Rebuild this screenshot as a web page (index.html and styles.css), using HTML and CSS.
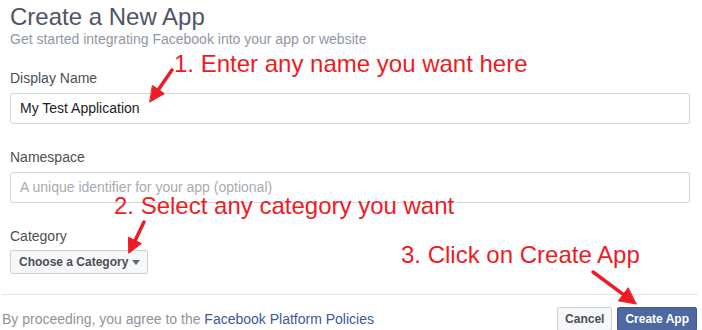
FILE: index.html
```html
<!DOCTYPE html>
<html>
<head>
<meta charset="utf-8">
<link rel="stylesheet" href="styles.css">
</head>
<body>
<div class="page">
  <div class="main">
    <h1 class="title">Create a New App</h1>
    <p class="subtitle">Get started integrating Facebook into your app or website</p>

    <div class="field">
      <label class="label">Display Name</label>
      <div class="input">My Test Application</div>
    </div>

    <div class="field">
      <label class="label">Namespace</label>
      <div class="input placeholder">A unique identifier for your app (optional)</div>
    </div>

    <div class="field">
      <label class="label">Category</label>
      <div class="select-row">
        <button class="select">Choose a Category <span class="caret"></span></button>
      </div>
    </div>
  </div>

  <div class="footer">
    <p class="terms">By proceeding, you agree to the <a class="link">Facebook Platform Policies</a></p>
    <div class="actions">
      <button class="btn btn-cancel">Cancel</button>
      <button class="btn btn-primary">Create App</button>
    </div>
  </div>

  <div class="note note-1">1. Enter any name you want here</div>
  <div class="note note-2">2. Select any category you want</div>
  <div class="note note-3">3. Click on Create App</div>

  <svg class="arrows" width="702" height="330" viewBox="0 0 702 330">
    <g fill="#ed1c24" stroke="#ed1c24" stroke-linecap="round" stroke-linejoin="round">
      <line x1="172" y1="70" x2="158.5" y2="89.6" stroke-width="3.5"/>
      <polygon points="150,102 164.3,93.6 152.7,85.6" stroke-width="1"/>
      <line x1="144" y1="222" x2="135.1" y2="240.4" stroke-width="3.5"/>
      <polygon points="129,253 141.4,243.5 128.8,237.3" stroke-width="1"/>
      <line x1="593" y1="272" x2="623.2" y2="294.4" stroke-width="3.5"/>
      <polygon points="636,304 618.4,300.8 628,288" stroke-width="1"/>
    </g>
  </svg>
</div>
</body>
</html>
```

FILE: styles.css
```css
html, body {
  margin: 0;
  padding: 0;
  background: #ffffff;
}

body {
  font-family: "Liberation Sans", Arial, Helvetica, sans-serif;
  width: 702px;
  height: 330px;
  overflow: hidden;
}

.page {
  position: relative;
  width: 702px;
  height: 330px;
}

.main {
  padding: 3px 12px 0 10px;
}

.title {
  margin: 0;
  font-size: 24px;
  line-height: 27px;
  font-weight: normal;
  color: #4e5665;
}

.subtitle {
  margin: 0;
  font-size: 14px;
  line-height: 18px;
  color: #9197a3;
}

.field {
  margin-top: 21px;
  display: flex;
  flex-direction: column;
}

.field + .field {
  margin-top: 24px;
}

.label {
  font-size: 14px;
  line-height: 18px;
  color: #4b4f56;
  margin-bottom: 6px;
}

.input {
  box-sizing: border-box;
  height: 31px;
  border: 1px solid #d3d6db;
  border-radius: 2px;
  padding: 0 9px;
  font-size: 14px;
  line-height: 29px;
  color: #1d2129;
  display: flex;
  align-items: center;
}

.placeholder {
  color: #a7abb1;
}

.select-row {
  display: flex;
  margin-top: -1px;
}

.select {
  box-sizing: border-box;
  height: 24px;
  padding: 0 7px 0 8px;
  border: 1px solid #ced0d4;
  border-radius: 2px;
  background: #f6f7f9;
  font-family: inherit;
  font-size: 12px;
  font-weight: bold;
  color: #4b4f56;
  display: flex;
  align-items: center;
  gap: 4px;
}

.caret {
  width: 0;
  height: 0;
  border-left: 4px solid transparent;
  border-right: 4px solid transparent;
  border-top: 5px solid #606770;
  margin-top: 1px;
}

.footer {
  margin: 20px 4px 0 2px;
  border-top: 1px solid #e5e5e5;
  padding: 12px 1px 0 0;
  display: flex;
  justify-content: space-between;
  align-items: center;
}

.terms {
  margin: 0;
  font-size: 14px;
  line-height: 18px;
  color: #90949c;
}

.link {
  color: #3b5998;
  text-decoration: none;
}

.actions {
  display: flex;
  gap: 5px;
}

.btn {
  box-sizing: border-box;
  height: 24px;
  padding: 0 7px;
  border-radius: 2px;
  font-family: inherit;
  font-size: 12px;
  font-weight: bold;
  line-height: 22px;
}

.btn-cancel {
  background: #f6f7f9;
  border: 1px solid #ced0d4;
  color: #4b4f56;
}

.btn-primary {
  background: #4e69a2;
  border: 1px solid #435a8b;
  color: #ffffff;
}

.note {
  position: absolute;
  font-size: 24px;
  line-height: 24px;
  color: #ed1c24;
  white-space: nowrap;
}

.note-1 { left: 174px; top: 52px; }
.note-2 { left: 114px; top: 194px; }
.note-3 { left: 401px; top: 243px; }

.arrows {
  position: absolute;
  left: 0;
  top: 0;
  pointer-events: none;
}
```
